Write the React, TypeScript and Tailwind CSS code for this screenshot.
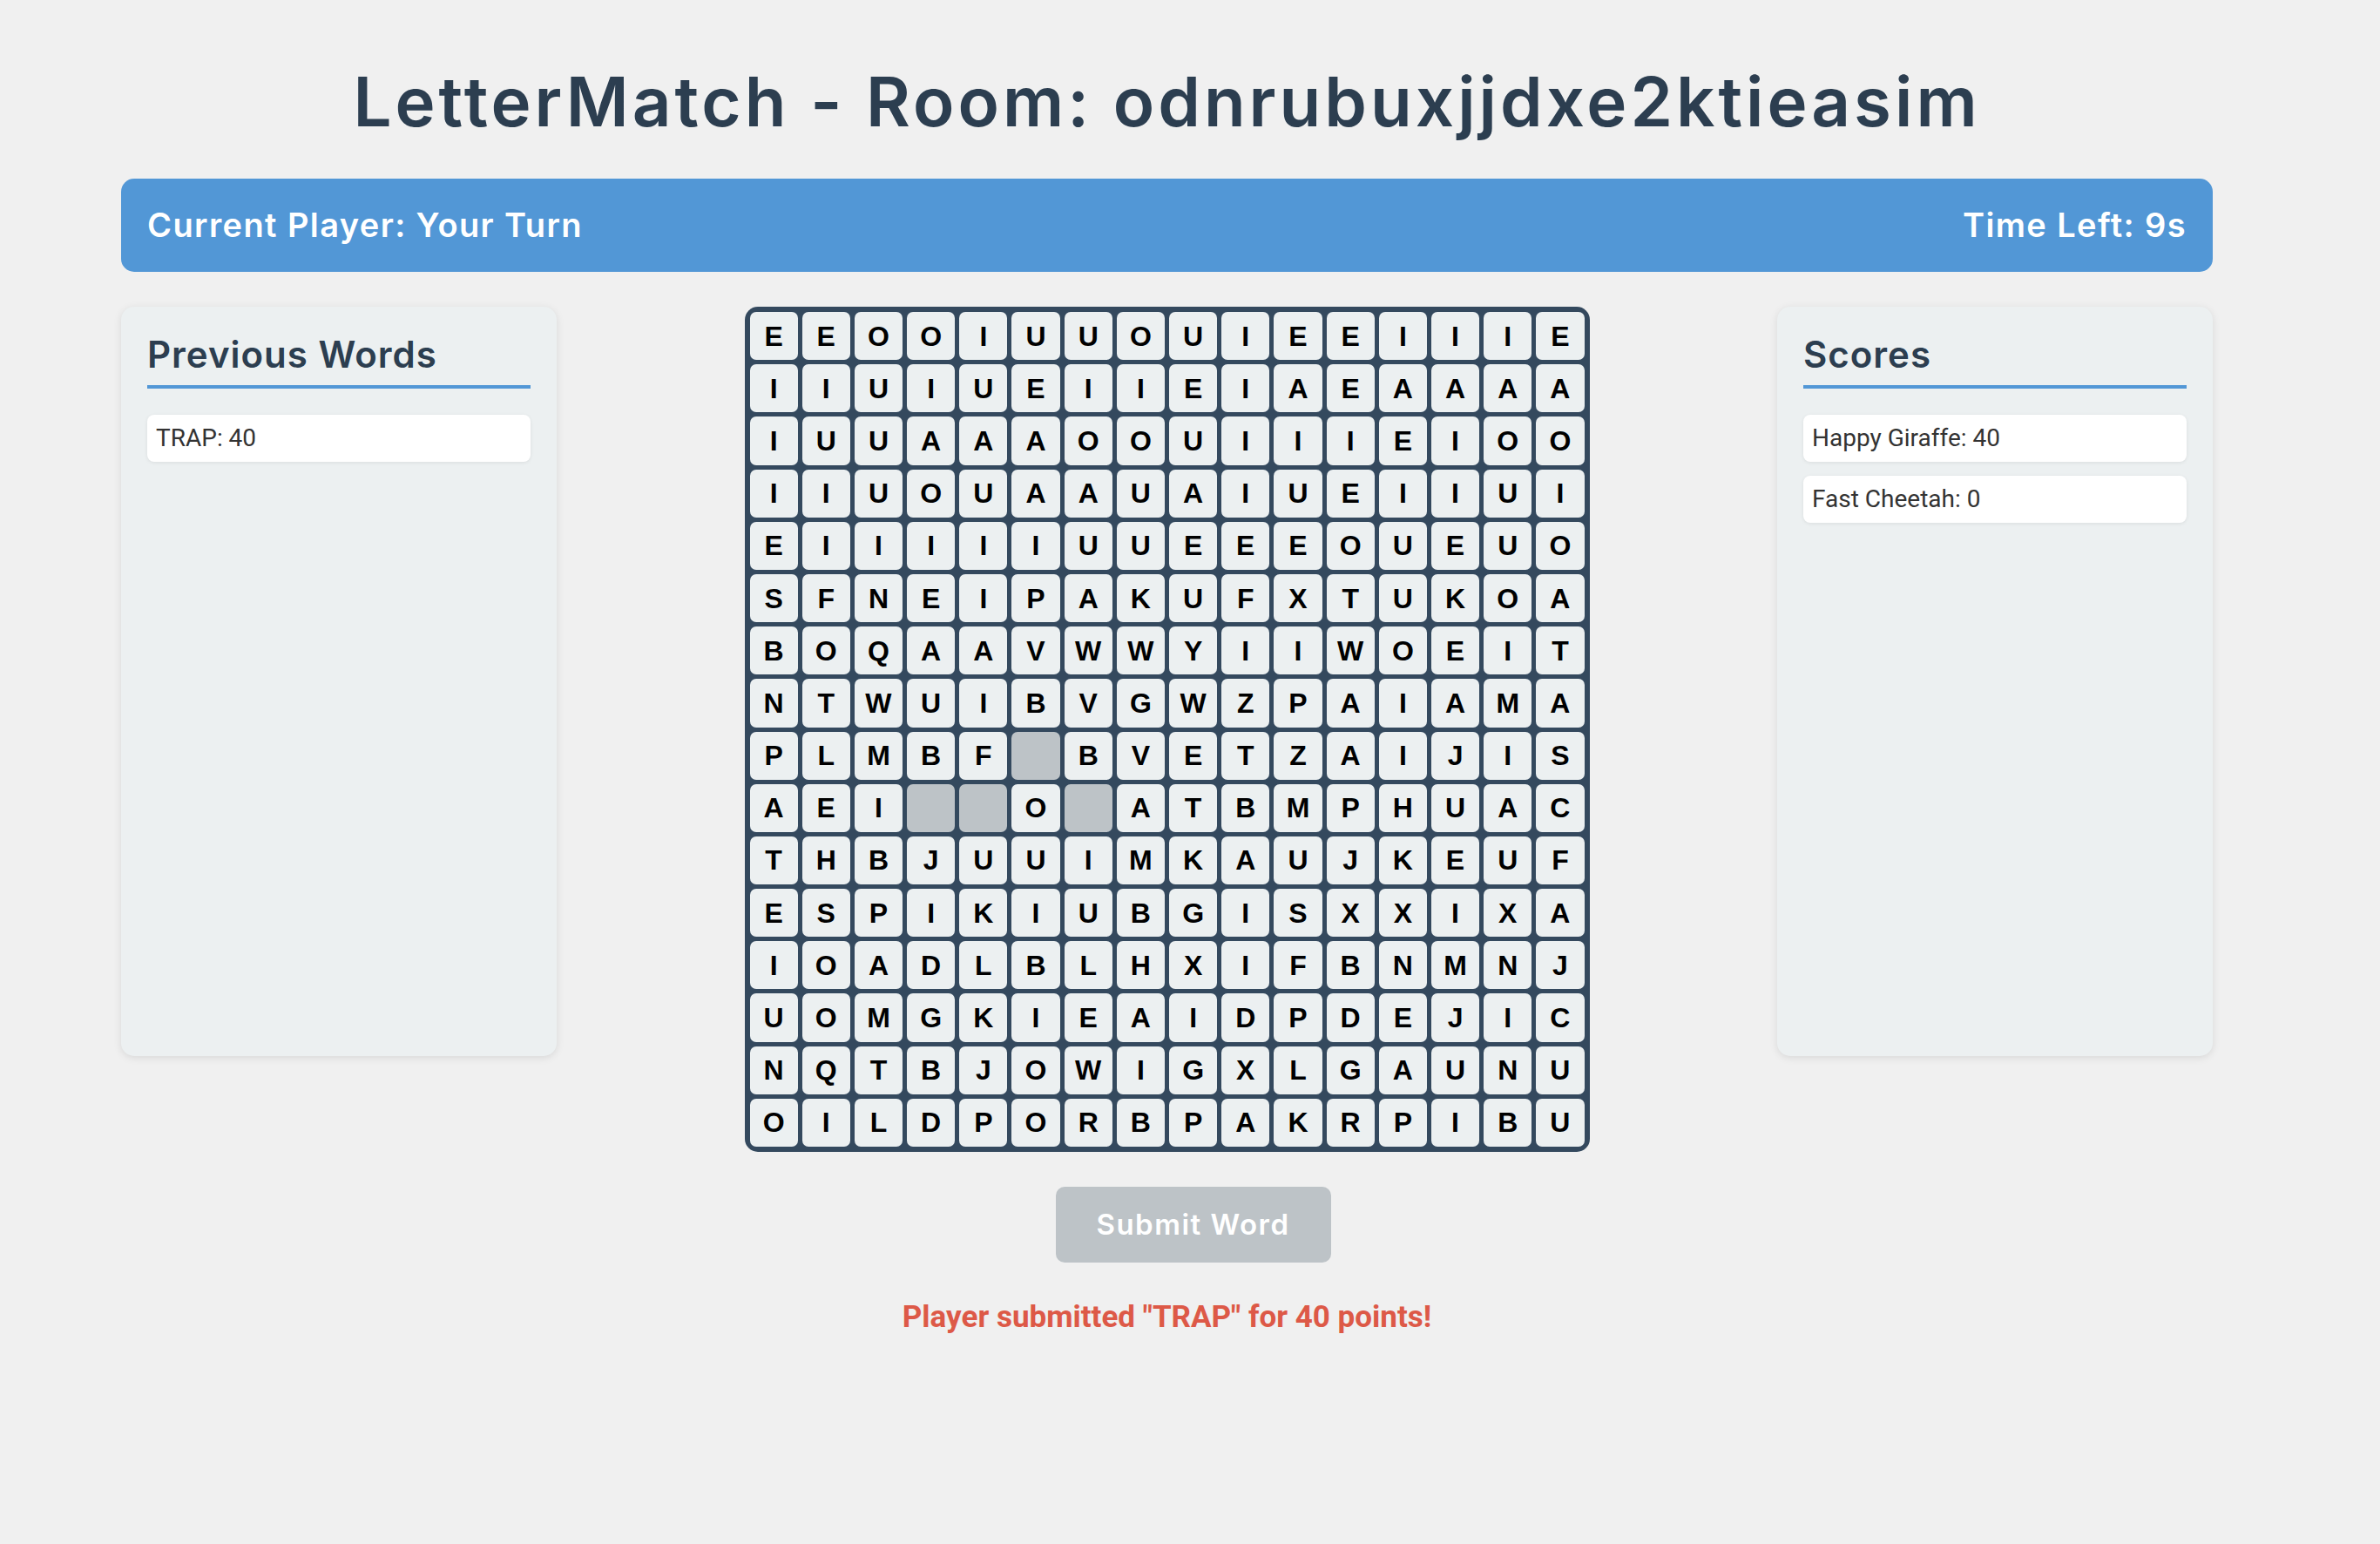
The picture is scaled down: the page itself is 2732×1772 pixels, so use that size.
import React from "react";

const GRID: string[] = [
  "EEOOIUUOUIEEIIIE",
  "IIUIUEIIEIAEAAAA",
  "IUUAAAOOUIIIEIOO",
  "IIUOUAAUAIUEIIUI",
  "EIIIIIUUEEEOUEUO",
  "SFNEIPAKUFXTUKOA",
  "BOQAAVWWYIIWOEIT",
  "NTWUIBVGWZPAIAMA",
  "PLMBF_BVETZAIJIS",
  "AEI__O_ATBMPHUAC",
  "THBJUUIMKAUJKEUF",
  "ESPIKIUBGISXXIXA",
  "IOADLBLHXIFBNMNJ",
  "UOMGKIEAIDPDEJIC",
  "NQTBJOWIGXLGAUNU",
  "OILDPORBPAKRPIBU",
];

function Panel({ title, items }: { title: string; items: string[] }) {
  return (
    <div className="w-[500px] h-[860px] rounded-[15px] bg-[#ecf0f1] shadow-[0_2px_10px_rgba(0,0,0,0.1)] px-[30px] pt-[34px]">
      <h2 className="font-['Inter'] text-[42px] leading-none font-semibold tracking-[1px] text-[#2c3e50] pb-[14px] border-b-[4px] border-[#5297d6]">
        {title}
      </h2>
      <div className="mt-[30px] flex flex-col gap-[16px]">
        {items.map((it) => (
          <div
            key={it}
            className="h-[54px] flex items-center px-[10px] rounded-[8px] bg-white shadow-[0_1px_4px_rgba(0,0,0,0.08)] font-['Roboto'] text-[28px] text-[#333333]"
          >
            {it}
          </div>
        ))}
      </div>
    </div>
  );
}

export default function App() {
  return (
    <div className="min-h-screen bg-[#f0f0f0]">
      <div className="w-[2401px] ml-[139px] pt-[78px]">
        <h1 className="font-['Inter'] text-center text-[78px] leading-none h-[78px] font-semibold tracking-[4px] text-[#2c3e50]">
          LetterMatch - Room: odnrubuxjjdxe2ktieasim
        </h1>
        <div className="mt-[49px] h-[107px] rounded-[15px] bg-[#5297d6] flex items-center justify-between px-[30px] text-white font-['Inter'] text-[38px] font-semibold tracking-[1.4px]">
          <span>Current Player: Your Turn</span>
          <span>Time Left: 9s</span>
        </div>
        <div className="mt-[40px] flex justify-between items-start">
          <Panel title="Previous Words" items={["TRAP: 40"]} />
          <div className="flex flex-col items-center">
            <div className="w-[970px] grid grid-cols-16 gap-[5px] p-[6px] rounded-[15px] bg-[#34495e]">
              {GRID.flatMap((row, r) =>
                row.split("").map((ch, c) =>
                  ch === "_" ? (
                    <div key={`${r}-${c}`} className="aspect-square rounded-[7px] bg-[#bdc3c7]" />
                  ) : (
                    <div
                      key={`${r}-${c}`}
                      className="aspect-square rounded-[7px] bg-[#ecf0f1] flex items-center justify-center font-['Liberation_Sans'] font-bold text-[32px] text-black"
                    >
                      {ch}
                    </div>
                  )
                )
              )}
            </div>
            <div className="mt-[40px] pl-[60px]">
              <button className="w-[316px] h-[87px] rounded-[10px] bg-[#bdc3c7] text-white font-['Inter'] text-[33px] font-semibold tracking-[1.5px]">
                Submit Word
              </button>
            </div>
            <p className="mt-[45px] font-['Roboto'] font-bold text-[35px] leading-none text-[#dd5947]">
              Player submitted "TRAP" for 40 points!
            </p>
          </div>
          <Panel title="Scores" items={["Happy Giraffe: 40", "Fast Cheetah: 0"]} />
        </div>
      </div>
    </div>
  );
}
